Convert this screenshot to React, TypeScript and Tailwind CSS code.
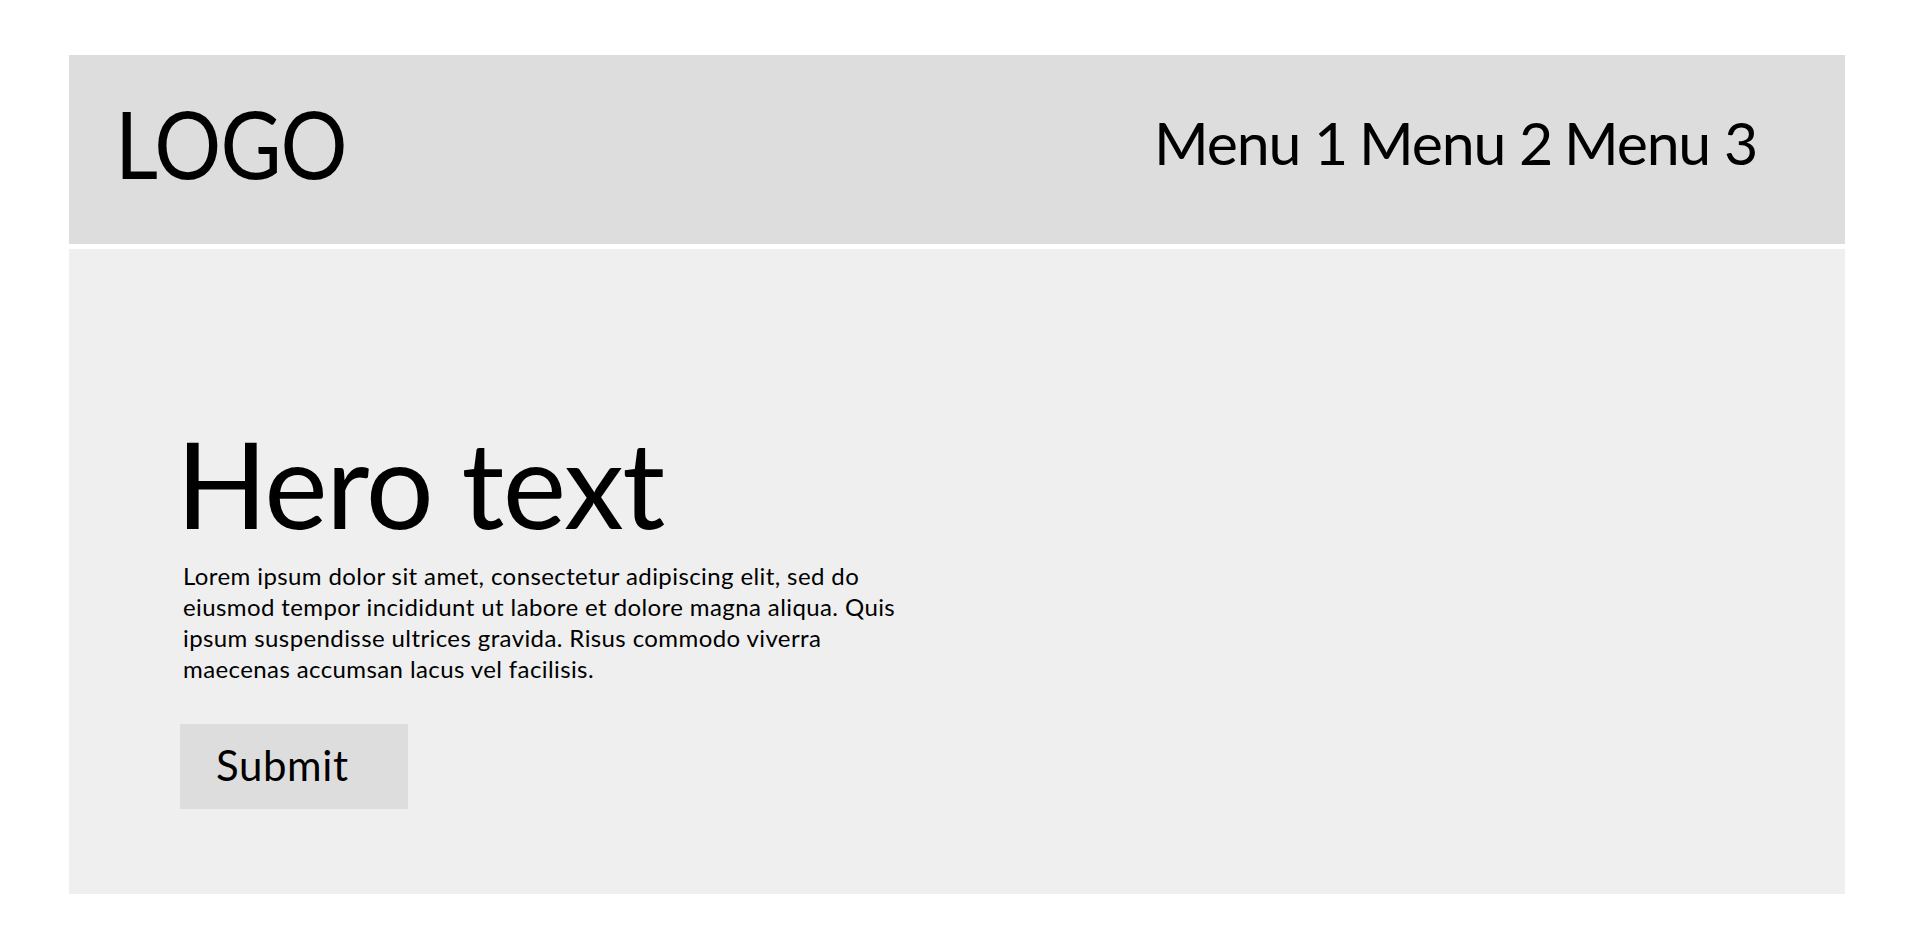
export default function App() {
  return (
    <div className="min-h-screen bg-white pt-[55px] font-['Lato',sans-serif] text-black">
      <div className="ml-[69px] w-[1776px]">
        <header className="flex h-[189px] items-start justify-between bg-[#dddddd] pl-[46px] pr-[88px]">
          <div className="mt-[42px] origin-left scale-x-[0.9] text-[93px] leading-none tracking-[-1px]">LOGO</div>
          <nav className="mt-[58px] flex gap-[12px] text-[59px] leading-none tracking-[-1.2px]">
            <span>Menu 1</span>
            <span>Menu 2</span>
            <span>Menu 3</span>
          </nav>
        </header>

        <section className="mt-[5px] h-[645px] bg-[#efefef] pl-[111px] pt-[174px]">
          <h1 className="-ml-[4px] text-[120px] leading-none tracking-[-1.5px]">Hero text</h1>
          <p className="ml-[3px] mt-[17px] text-[24px] leading-[31px] tracking-[0.4px]">
            Lorem ipsum dolor sit amet, consectetur adipiscing elit, sed do
            <br />
            eiusmod tempor incididunt ut labore et dolore magna aliqua. Quis
            <br />
            ipsum suspendisse ultrices gravida. Risus commodo viverra
            <br />
            maecenas accumsan lacus vel facilisis.
          </p>
          <button className="mt-[40px] flex h-[85px] w-[228px] items-start bg-[#dddddd] pl-[36px] pt-[20px] text-[42px] leading-none tracking-[0.6px]">
            Submit
          </button>
        </section>
      </div>
    </div>
  );
}
